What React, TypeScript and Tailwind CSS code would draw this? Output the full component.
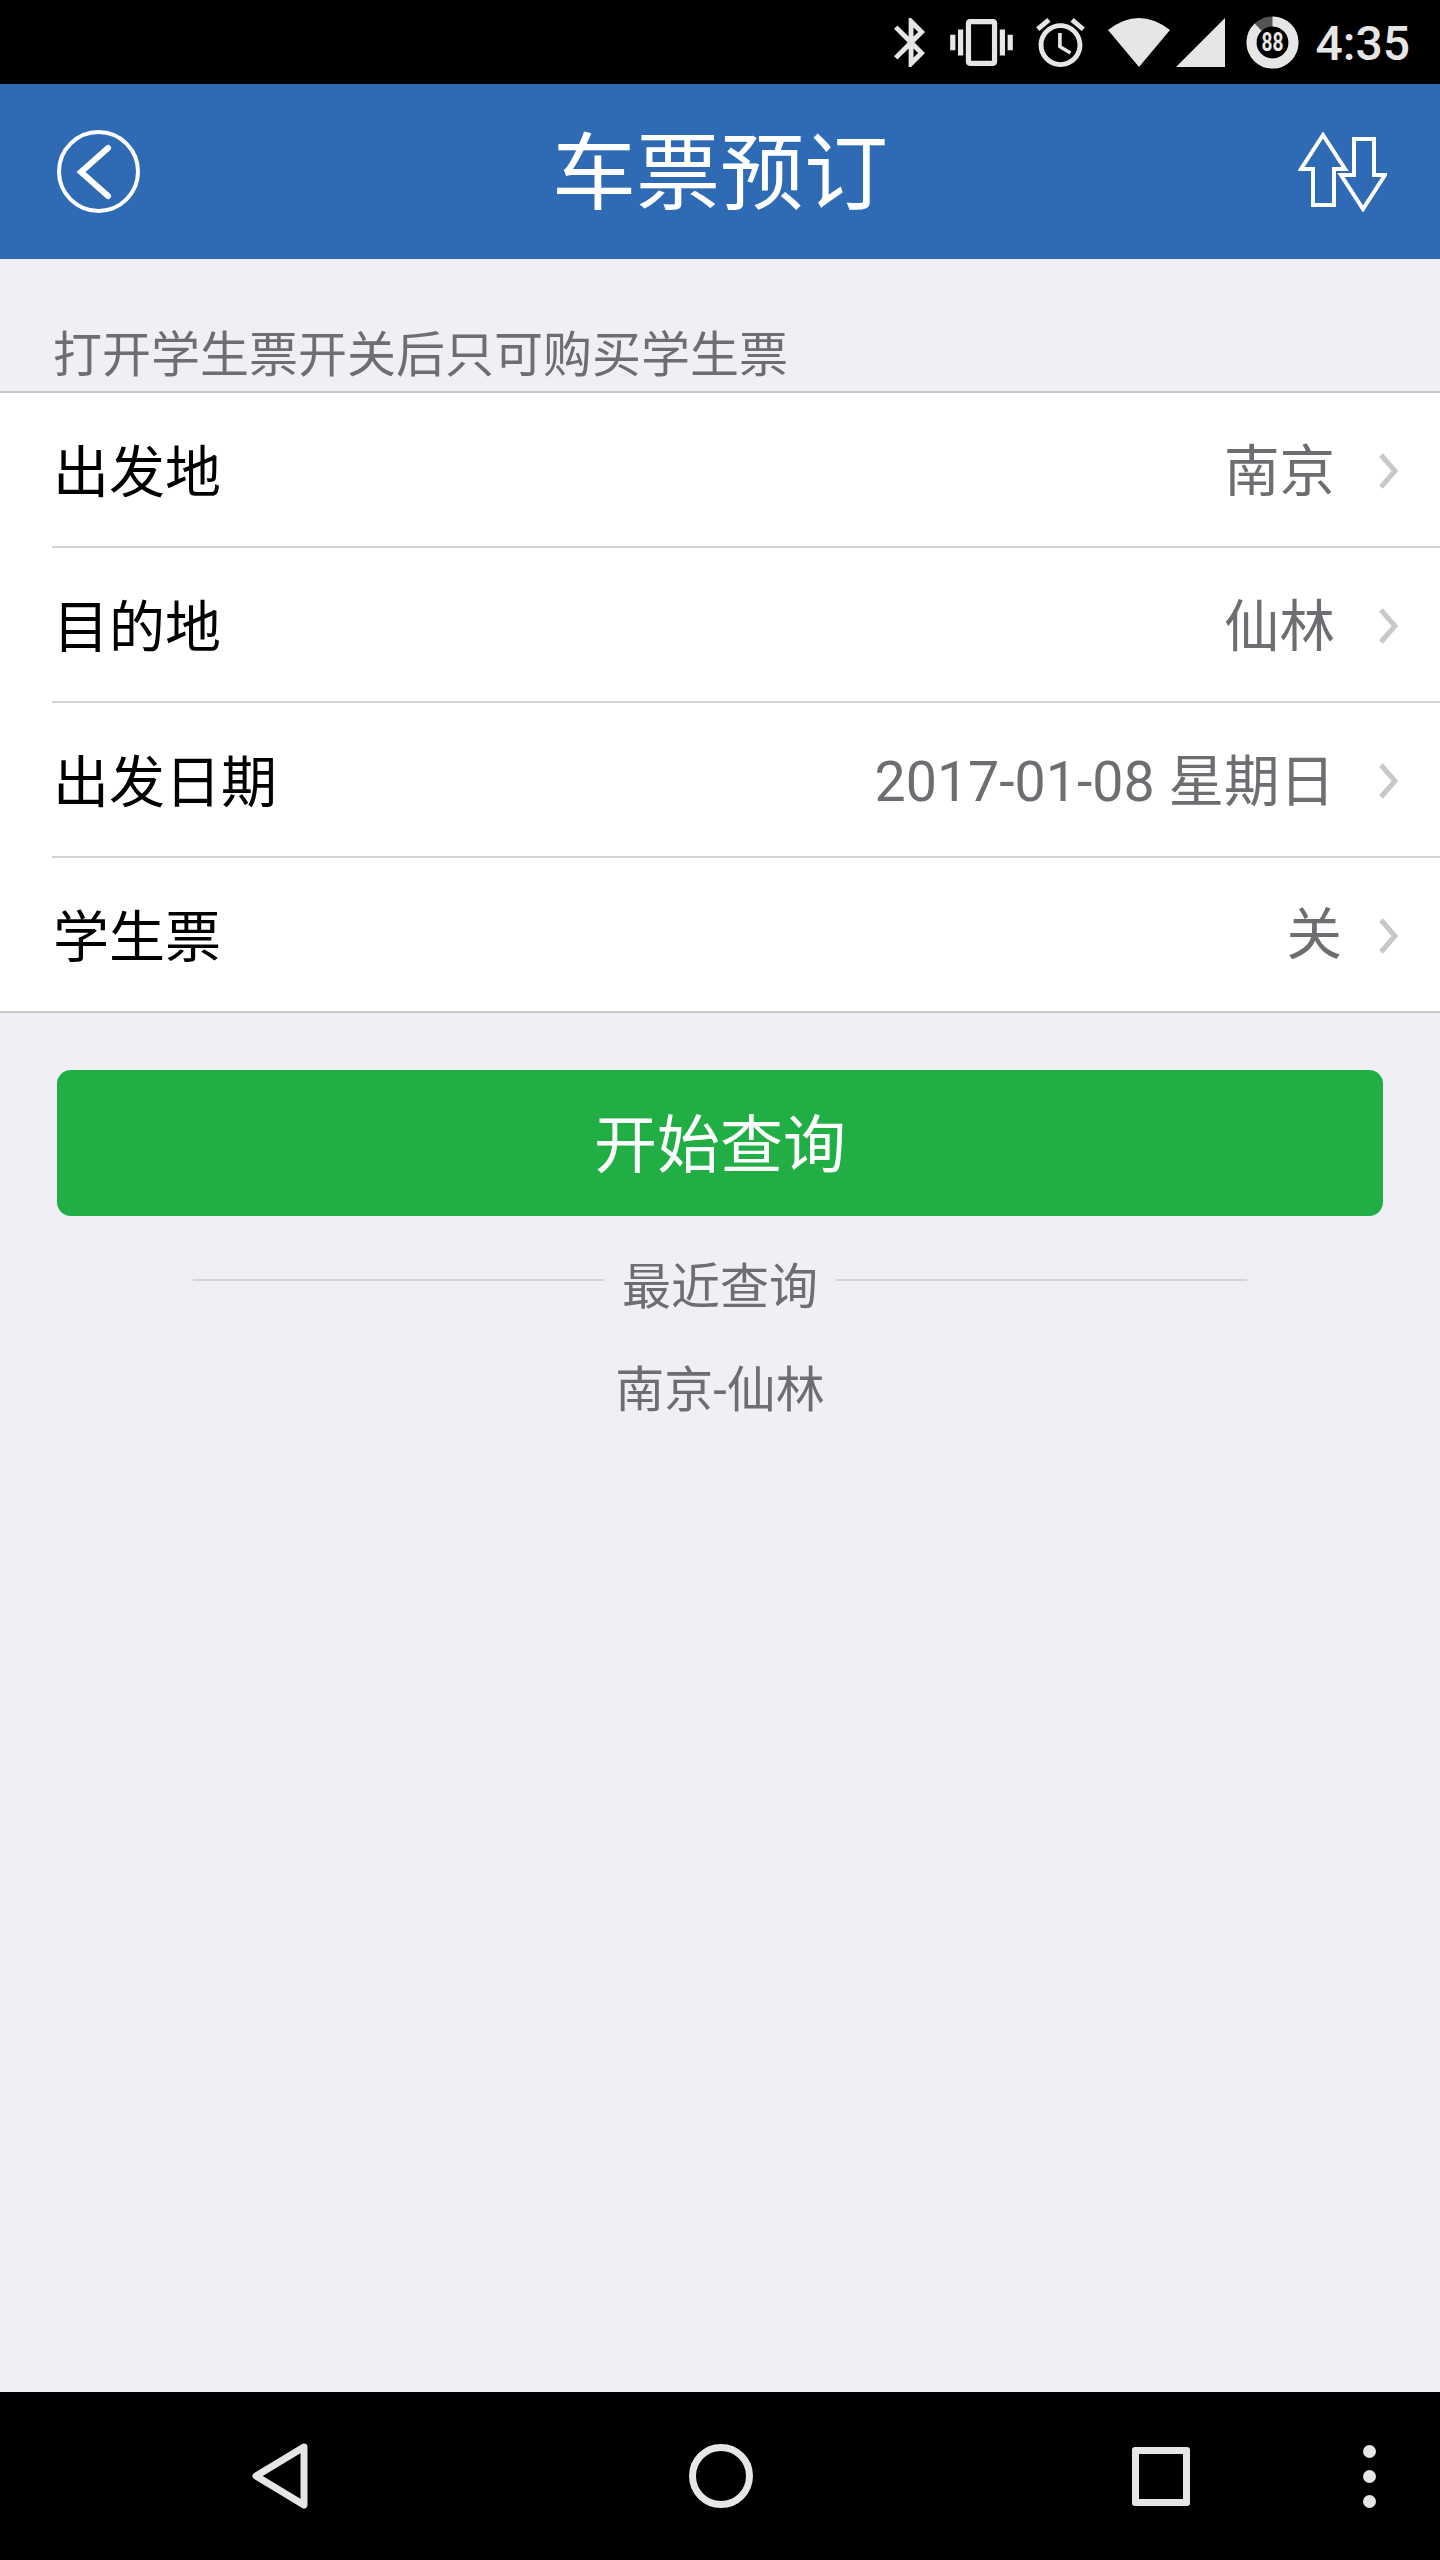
const FONT = "font-['Roboto','Noto_Sans_CJK_SC',sans-serif]";

const ROWS = [
  { label: '出发地', value: '南京' },
  { label: '目的地', value: '仙林' },
  { label: '出发日期', value: '2017-01-08 星期日' },
  { label: '学生票', value: '关' },
];

function StatusBar() {
  return (
    <div className="flex h-[84px] shrink-0 items-center justify-end bg-black pr-[30px] text-[#e6e6e6]">
      <svg viewBox="5 2 12.71 20" className="h-[49px] w-[31px]" fill="currentColor">
        <path d="M17.71 7.71L12 2h-1v7.59L6.41 5 5 6.41 10.59 12 5 17.59 6.41 19 11 14.41V22h1l5.71-5.71-4.3-4.29 4.3-4.29zM13 5.83l1.88 1.88L13 9.59V5.83zm1.88 10.46L13 18.17v-3.76l1.88 1.88z" />
      </svg>
      <svg viewBox="0 3 24 18" className="ml-[25px] h-[47px] w-[63px]" fill="currentColor">
        <path d="M0 15h2V9H0v6zm3 2h2V7H3v10zm19-8v6h2V9h-2zm-3 8h2V7h-2v10zM16.5 3h-9C6.67 3 6 3.67 6 4.5v15c0 .83.67 1.5 1.5 1.5h9c.83 0 1.5-.67 1.5-1.5v-15c0-.83-.67-1.5-1.5-1.5zM16 19H8V5h8v14z" />
      </svg>
      <svg viewBox="2 1.86 20 20.14" className="ml-[23px] h-[49px] w-[49px]" fill="currentColor">
        <path d="M22 5.72l-4.6-3.86-1.29 1.53 4.6 3.86L22 5.72zM7.88 3.39L6.6 1.86 2 5.71l1.29 1.53 4.59-3.85zM12.5 8H11v6l4.75 2.85.75-1.23-4-2.37V8zM12 4c-4.97 0-9 4.03-9 9s4.03 9 9 9c4.97 0 9-4.03 9-9s-4.03-9-9-9zm0 16c-3.87 0-7-3.13-7-7s3.13-7 7-7 7 3.13 7 7-3.13 7-7 7z" />
      </svg>
      <svg viewBox="0 0 62 49" className="ml-[23px] h-[49px] w-[62px]" fill="currentColor">
        <path d="M0 12 Q31 -12 62 12 L31 49 Z" />
      </svg>
      <svg viewBox="0 0 49 49" className="ml-[6px] h-[49px] w-[49px]" fill="currentColor">
        <path d="M49 0 V49 H0 Z" />
      </svg>
      <svg viewBox="0 0 53 53" className="ml-[21px] h-[53px] w-[53px]">
        <g transform="rotate(-90 26.5 26.5)" fill="none" strokeWidth="10">
          <circle cx="26.5" cy="26.5" r="21" stroke="#555555" />
          <circle cx="26.5" cy="26.5" r="21" stroke="#e6e6e6" pathLength="100" strokeDasharray="88 12" />
        </g>
        <text x="26.5" y="35" textAnchor="middle" fontFamily="Roboto" fontWeight="700" fontSize="25" fill="#e6e6e6" textLength="22" lengthAdjust="spacingAndGlyphs">
          88
        </text>
      </svg>
      <span className="ml-[17px] pt-[4px] text-[48px] font-medium leading-none">4:35</span>
    </div>
  );
}

function Header() {
  return (
    <div className="grid h-[175px] shrink-0 grid-cols-[1fr_auto_1fr] items-center bg-[#2f6bb5] px-[57px] text-white">
      <svg viewBox="0 0 83 83" className="h-[83px] w-[83px]" fill="none" stroke="currentColor">
        <circle cx="41.5" cy="41.5" r="39.5" strokeWidth="4" />
        <path d="M51 18 L24 42 L51 66" strokeWidth="6" strokeLinecap="round" strokeLinejoin="miter" />
      </svg>
      <h1 className="pt-[6px] text-[84px] font-normal leading-none">车票预订</h1>
      <svg viewBox="0 0 89 80" className="mr-[-4px] h-[80px] w-[89px] justify-self-end" fill="none" stroke="currentColor" strokeWidth="4">
        <path d="M25 3 L3 37 H15 V73 H36 V37 H47 Z" />
        <path d="M56 7 H76 V43 H87 L65 77 L43 43 H56 Z" />
      </svg>
    </div>
  );
}

function Row({ label, value, last }: { label: string; value: string; last: boolean }) {
  return (
    <div className={`flex items-stretch pl-[52px] ${last ? 'h-[153px]' : 'h-[155px]'}`}>
      <div className={`flex flex-1 items-center justify-between pr-[42px] ${last ? '' : 'border-b-2 border-[#d4d4d8]'}`}>
        <span className="ml-[1px] pt-[6px] text-[56px] leading-none text-black">{label}</span>
        <div className="flex items-center">
          <span className={`text-[55.5px] leading-none text-[#6d6d72] ${last ? 'mr-[36px] pt-[3px]' : 'mr-[43px] pt-[6px]'}`}>{value}</span>
          <svg viewBox="0 0 20 36" className="mt-[2px] h-[36px] w-[20px]" fill="none" stroke="#c8c7cc" strokeWidth="5">
            <path d="M3 2 L17 18 L3 34" />
          </svg>
        </div>
      </div>
    </div>
  );
}

function NavBar() {
  return (
    <div className="flex h-[168px] shrink-0 items-center bg-black pl-[252px] text-[#e6e6e6]">
      <svg viewBox="0 0 56 66" className="h-[66px] w-[56px]" fill="none" stroke="currentColor" strokeWidth="7" strokeLinejoin="round">
        <path d="M52 4 L4 33 L52 62 Z" />
      </svg>
      <div className="ml-[381px] h-[64px] w-[64px] rounded-full border-[7px] border-[#e6e6e6]" />
      <div className="ml-[379px] h-[59px] w-[58px] rounded-[3px] border-[7px] border-[#e6e6e6]" />
      <div className="ml-[173px] flex flex-col gap-[12px]">
        <div className="h-[13px] w-[13px] rounded-full bg-[#e6e6e6]" />
        <div className="h-[13px] w-[13px] rounded-full bg-[#e6e6e6]" />
        <div className="h-[13px] w-[13px] rounded-full bg-[#e6e6e6]" />
      </div>
    </div>
  );
}

export default function App() {
  return (
    <div lang="zh-CN" className={`flex h-[2560px] w-[1440px] flex-col bg-[#efeff4] ${FONT}`}>
      <StatusBar />
      <Header />
      <main className="flex-1">
        <p className="flex h-[134px] items-end border-b-2 border-[#c8c7cc] pb-[11px] pl-[53px] text-[49px] leading-none text-[#6d6d72]">
          打开学生票开关后只可购买学生票
        </p>
        <div className="border-b-2 border-[#c8c7cc] bg-white">
          {ROWS.map((row, i) => (
            <Row key={row.label} label={row.label} value={row.value} last={i === ROWS.length - 1} />
          ))}
        </div>
        <div className="px-[57px] pt-[57px]">
          <button type="button" className="flex h-[146px] w-full items-center justify-center rounded-[14px] bg-[#21ae45] pt-[4px] text-[63px] leading-none text-white">
            开始查询
          </button>
        </div>
        <div className="mt-[31px] flex items-center justify-center gap-[18px] text-[49px] leading-none text-[#6d6d72]">
          <div className="h-[2px] w-[411px] bg-[#d4d4d8]" />
          <span className="pt-[16px]">最近查询</span>
          <div className="h-[2px] w-[411px] bg-[#d4d4d8]" />
        </div>
        <p className="mt-[54px] text-center text-[49px] leading-none text-[#6d6d72]">南京-仙林</p>
      </main>
      <NavBar />
    </div>
  );
}
